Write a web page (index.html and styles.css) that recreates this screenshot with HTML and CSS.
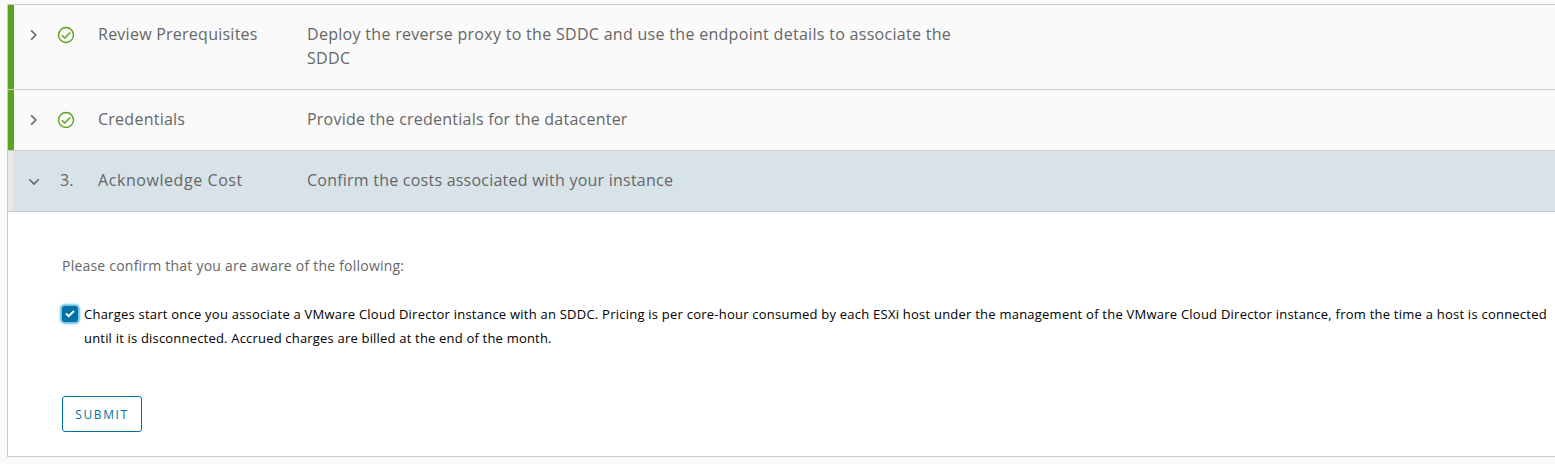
FILE: index.html
```html
<!DOCTYPE html>
<html lang="en">
<head>
<meta charset="utf-8">
<title>Associate SDDC</title>
<link rel="stylesheet" href="styles.css">
</head>
<body>
<main class="stepper">
  <section class="step step-complete step-prerequisites">
    <svg class="caret" viewBox="0 0 12 12"><path d="M3.2 1.4 7.8 6 3.2 10.6"/></svg>
    <svg class="status" viewBox="0 0 18 18"><circle cx="9" cy="9" r="7.5"/><path d="M4.8 9.2 7.8 12.1 13.2 6.5"/></svg>
    <h2 class="title">Review Prerequisites</h2>
    <p class="description">Deploy the reverse proxy to the SDDC and use the endpoint details to associate the<br>SDDC</p>
  </section>
  <section class="step step-complete step-credentials">
    <svg class="caret" viewBox="0 0 12 12"><path d="M3.2 1.4 7.8 6 3.2 10.6"/></svg>
    <svg class="status" viewBox="0 0 18 18"><circle cx="9" cy="9" r="7.5"/><path d="M4.8 9.2 7.8 12.1 13.2 6.5"/></svg>
    <h2 class="title">Credentials</h2>
    <p class="description">Provide the credentials for the datacenter</p>
  </section>
  <section class="step step-active">
    <svg class="caret" viewBox="0 0 12 12"><path d="M1.2 4.2 6 9 10.8 4.2"/></svg>
    <span class="number">3.</span>
    <h2 class="title">Acknowledge Cost</h2>
    <p class="description">Confirm the costs associated with your instance</p>
  </section>
  <div class="content">
    <p class="intro">Please confirm that you are aware of the following:</p>
    <div class="consent">
      <span class="checkbox"><svg viewBox="0 0 16 16"><path d="M4 7.5 6.7 10.2 12 5"/></svg></span>
      <p class="terms">Charges start once you associate a VMware Cloud Director instance with an SDDC. Pricing is per core-hour consumed by each ESXi host under the management of the VMware Cloud Director instance, from the time a host is connected<br><span class="terms-end">until it is disconnected. Accrued charges are billed at the end of the month.</span></p>
    </div>
    <button class="submit" type="button">SUBMIT</button>
  </div>
</main>
</body>
</html>
```
FILE: styles.css
```css
* { box-sizing: border-box; }

body {
  margin: 0;
  height: 464px;
  padding: 4px 0 0 7px;
  overflow: hidden;
  background: #fafafa;
  color: #666;
  font-family: "Open Sans", "Noto Sans", sans-serif;
}

h2, p { margin: 0; font-weight: 400; }

.stepper {
  height: 453px;
  border: 1px solid #ccc;
  border-right: 0;
}

.step {
  display: flex;
  align-items: flex-start;
  height: 61px;
  padding: 17px 0 0 20px;
  border-bottom: 1px solid #ccc;
  font-size: 16px;
  line-height: 24px;
  white-space: nowrap;
}

.step-prerequisites { height: 85px; }
.step-complete { background: linear-gradient(90deg, #5aa220 6px, #fafafa 6px); }
.step-active { background: linear-gradient(90deg, #e8e8e8 6px, #d8e3e9 6px); }

.caret {
  width: 12px;
  height: 12px;
  margin: 7px 18px 0 0;
  fill: none;
  stroke: #666;
  stroke-width: 1.6;
}

.status {
  width: 18px;
  height: 18px;
  margin: 4px 23px 0 -1px;
  fill: none;
  stroke: #5aa220;
  stroke-width: 1.4;
}

.number { width: 38px; margin-left: 2px; }

.title {
  width: 209px;
  font-size: 16px;
  letter-spacing: 0.25px;
}

.description { letter-spacing: 0.23px; }
.step-prerequisites .description { letter-spacing: 0.3px; }
.step-active .title { letter-spacing: 0.57px; }

.content {
  height: 244px;
  padding: 42px 0 0 54px;
  background: #fff;
}

.intro {
  font-size: 14px;
  line-height: 24px;
  letter-spacing: 0.22px;
}

.consent {
  display: flex;
  align-items: flex-start;
  gap: 6px;
  margin-top: 24px;
}

.checkbox {
  flex: none;
  width: 16px;
  height: 16px;
  margin-top: 4px;
  border-radius: 3px;
  background: #0072a3;
  box-shadow: 0 0 2px 2px #6bc1e3;
}

.checkbox svg {
  display: block;
  width: 16px;
  height: 16px;
  fill: none;
  stroke: #fff;
  stroke-width: 2;
}

.terms {
  color: #000;
  font-size: 13px;
  line-height: 24px;
  letter-spacing: 0.232px;
  white-space: nowrap;
}

.terms-end { letter-spacing: 0.19px; }

.submit {
  display: block;
  width: 80px;
  height: 36px;
  margin-top: 46px;
  padding: 2px 0 0;
  border: 1px solid #0072a3;
  border-radius: 3px;
  background: transparent;
  color: #0072a3;
  font: 500 12px/32px "Open Sans", "Noto Sans", sans-serif;
  letter-spacing: 1.6px;
}
```
